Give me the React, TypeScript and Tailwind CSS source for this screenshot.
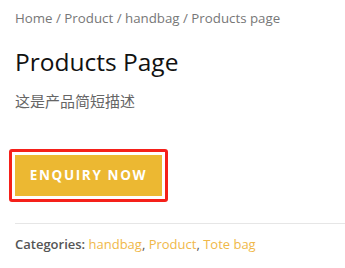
const App = () => {
  return (
    <div className="w-[345px] h-[268px] overflow-hidden bg-white pl-[15px] font-['Open_Sans',sans-serif]">
      <nav className="pt-[8px] text-[13.3px] leading-[20px] text-[#777]">
        Home / Product / handbag / Products page
      </nav>
      <h1 className="mt-[19px] text-[24.5px] leading-[30px] font-normal text-[#111]">Products Page</h1>
      <p className="mt-[14px] text-[15px] leading-[20px] text-[#666] font-['Noto_Sans_CJK_SC',sans-serif]">
        这是产品简短描述
      </p>
      <div className="mt-[38px] -ml-[6px] inline-block rounded-[3px] border-[3px] border-[#f5201a] p-[3px]">
        <button className="h-[41px] w-[147px] bg-[#ecb832] text-[13.5px] font-bold uppercase tracking-[0.12em] text-white">
          Enquiry now
        </button>
      </div>
      <div className="mt-[21px] border-t border-[#e6e6e6] pt-[10px] text-[13px] leading-[20px]">
        <span className="font-semibold text-[#555]">Categories: </span>
        <a className="text-[#f0b849]">handbag</a>
        <span className="text-[#555]">, </span>
        <a className="text-[#f0b849]">Product</a>
        <span className="text-[#555]">, </span>
        <a className="text-[#f0b849]">Tote bag</a>
      </div>
    </div>
  );
};

export default App;
